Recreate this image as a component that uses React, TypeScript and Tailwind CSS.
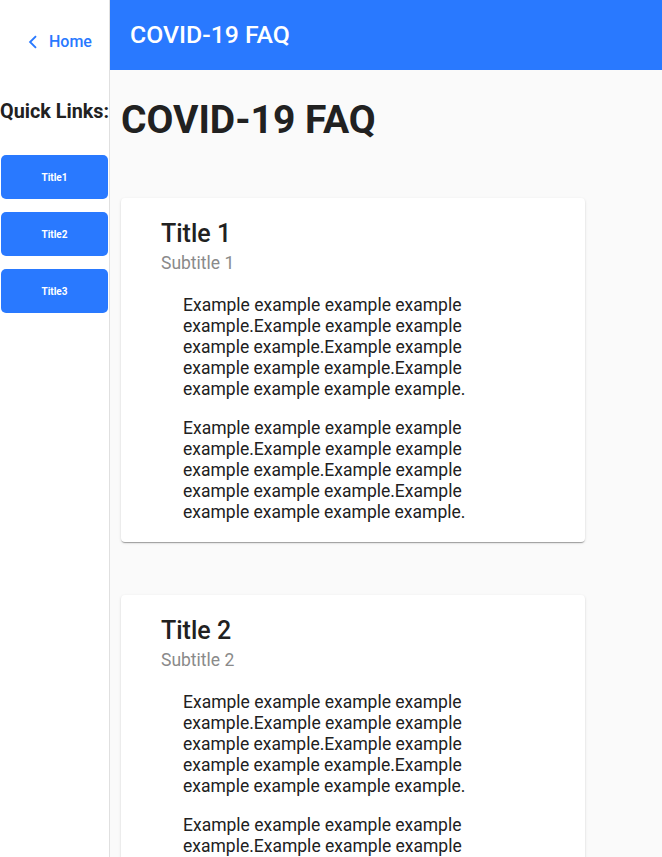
import React from "react";

const para =
  "Example example example example example.Example example example example example.Example example example example example.Example example example example example.";

function Card({ n }: { n: number }) {
  return (
    <div className="w-[464px] bg-white rounded-[4px] shadow-[0_2px_1px_-1px_rgba(0,0,0,0.2),0_1px_1px_0_rgba(0,0,0,0.14),0_1px_3px_0_rgba(0,0,0,0.12)] pt-[21px] pb-[19px] pl-[40px] pr-[40px]">
      <div className="text-[25px] leading-[29px] font-medium text-[#212121]">Title {n}</div>
      <div className="mt-[5px] text-[17.5px] leading-[20px] text-[#8a8a8a]">Subtitle {n}</div>
      <div className="mt-[22px] pl-[22px]">
        <p className="w-[300px] text-[17.5px] leading-[21px] text-[#212121]">{para}</p>
        <p className="mt-[18px] w-[300px] text-[17.5px] leading-[21px] text-[#212121]">{para}</p>
      </div>
    </div>
  );
}

export default function App() {
  return (
    <div className="flex min-h-[857px] bg-[#fafafa]" style={{ fontFamily: "Roboto, 'Noto Sans', sans-serif" }}>
      <aside className="w-[110px] shrink-0 bg-white border-r border-[#e0e0e0] flex flex-col">
        <div className="h-[84px] flex items-center pl-[26px] gap-[9px] text-[#2979ff]">
          <svg width="14" height="14" viewBox="0 0 24 24" fill="none" stroke="#2979ff" strokeWidth="3.2" strokeLinecap="square">
            <polyline points="16,3 7,12 16,21" />
          </svg>
          <span className="text-[16px] font-medium">Home</span>
        </div>
        <div className="text-[19.8px] font-bold text-[#212121] whitespace-nowrap leading-[23px] mt-[16px]">Quick Links:</div>
        <div className="mt-[32px] flex flex-col gap-[13px] pl-[1px]">
          {["Title1", "Title2", "Title3"].map((t) => (
            <button
              key={t}
              className="w-[107px] h-[44px] rounded-[5px] bg-[#2979ff] text-white text-[10px] font-bold flex items-center justify-center"
            >
              {t}
            </button>
          ))}
        </div>
      </aside>
      <main className="flex-1 flex flex-col">
        <header className="h-[70px] bg-[#2979ff] flex items-center pl-[20px]">
          <span className="text-white text-[24.8px] font-medium">COVID-19 FAQ</span>
        </header>
        <div className="pl-[11px]">
          <h1 className="mt-[27px] text-[39px] leading-[47px] font-bold text-[#212121]">COVID-19 FAQ</h1>
          <div className="mt-[54px] flex flex-col gap-[53px] pb-[40px]">
            <Card n={1} />
            <Card n={2} />
          </div>
        </div>
      </main>
    </div>
  );
}
